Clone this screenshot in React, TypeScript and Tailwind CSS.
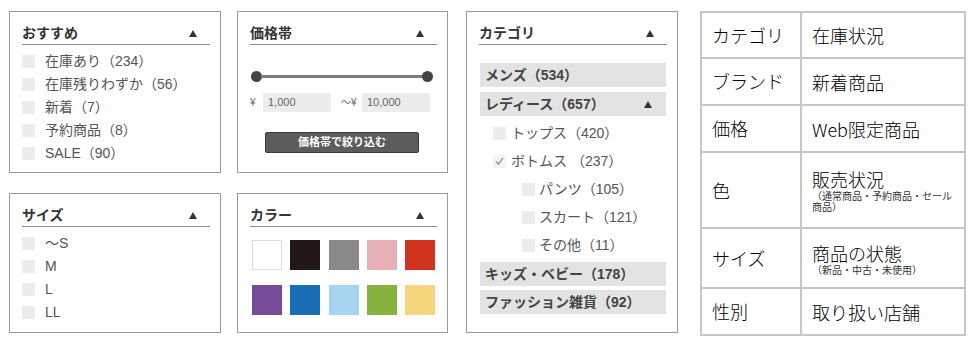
import type { ReactNode } from "react";

const FONT = '"Liberation Sans", "Noto Sans CJK JP", sans-serif';

function Tri({ className = "" }: { className?: string }) {
  return (
    <svg width="8" height="7" viewBox="0 0 8 7" className={className}>
      <polygon points="4,0 8,7 0,7" fill="#333" />
    </svg>
  );
}

function Panel({ title, className = "", children }: { title: string; className?: string; children: ReactNode }) {
  return (
    <div className={`border border-[#9a9a9a] bg-white pl-3 pr-[10px] pt-[10px] ${className}`}>
      <div className="flex h-[23px] items-center justify-between border-b border-[#8c8c8c]">
        <span className="text-[14px] font-bold text-[#333]">{title}</span>
        <Tri className="mr-[13px]" />
      </div>
      {children}
    </div>
  );
}

function Box() {
  return <span className="block h-[13px] w-[13px] shrink-0 bg-[#ececec]" />;
}

function CheckList({ items }: { items: string[] }) {
  return (
    <div className="mt-[5px]">
      {items.map((it) => (
        <div key={it} className="flex h-[23px] items-center gap-[10px] text-[14px] text-[#555]">
          <Box />
          <span>{it}</span>
        </div>
      ))}
    </div>
  );
}

const swatches = [
  "bg-white border border-[#dcdcdc]",
  "bg-[#231815]",
  "bg-[#8a8a8a]",
  "bg-[#e6b0b6]",
  "bg-[#d0331e]",
  "bg-[#774c98]",
  "bg-[#1a6db7]",
  "bg-[#a6d3f0]",
  "bg-[#86b33f]",
  "bg-[#f5d67c]",
];

function Bar({ children, arrow }: { children: ReactNode; arrow?: boolean }) {
  return (
    <div className="ml-[1px] mr-[1px] flex h-[24px] items-center justify-between bg-[#e3e3e3] pl-[5px] text-[14px] font-bold text-[#444]">
      <span>{children}</span>
      {arrow && <Tri className="mr-[14px]" />}
    </div>
  );
}

function Sub({ label, deep, checked }: { label: string; deep?: boolean; checked?: boolean }) {
  return (
    <div className={`flex h-[28px] items-center text-[14px] text-[#555] ${deep ? "pl-[43px] gap-[4px]" : "pl-[14px] gap-[5px]"}`}>
      {checked ? (
        <span className="flex h-[13px] w-[13px] items-center justify-center bg-[#f4f4f4]">
          <svg width="9" height="8" viewBox="0 0 9 8">
            <polyline points="1,4.5 3.5,7 8,1" fill="none" stroke="#888" strokeWidth="1.2" />
          </svg>
        </span>
      ) : (
        <Box />
      )}
      <span>{label}</span>
    </div>
  );
}

const rows: { k: string; v: string; note?: string; h: string }[] = [
  { k: "カテゴリ", v: "在庫状況", h: "h-[46px]" },
  { k: "ブランド", v: "新着商品", h: "h-[47px]" },
  { k: "価格", v: "Web限定商品", h: "h-[47px]" },
  { k: "色", v: "販売状況", note: "（通常商品・予約商品・セール商品）", h: "h-[76px]" },
  { k: "サイズ", v: "商品の状態", note: "（新品・中古・未使用）", h: "h-[60px]" },
  { k: "性別", v: "取り扱い店舗", h: "h-[47px]" },
];

export default function App() {
  return (
    <div className="flex h-[345px] w-[977px] bg-white pl-[9px] pt-[11px]" style={{ fontFamily: FONT }}>
      <div className="flex w-[212px] flex-col gap-[20px]">
        <Panel title="おすすめ" className="h-[162px]">
          <CheckList items={["在庫あり（234）", "在庫残りわずか（56）", "新着（7）", "予約商品（8）", "SALE（90）"]} />
        </Panel>
        <Panel title="サイズ" className="h-[140px]">
          <CheckList items={["～S", "M", "L", "LL"]} />
        </Panel>
      </div>

      <div className="ml-[16px] flex w-[211px] flex-col gap-[20px]">
        <Panel title="価格帯" className="h-[162px]">
          <div className="ml-[1px] mr-[4px] mt-[26px] flex items-center">
            <span className="h-[11px] w-[11px] shrink-0 rounded-full bg-[#444]" />
            <span className="-mx-[1px] h-[3px] flex-1 bg-[#7a7a7a]" />
            <span className="h-[11px] w-[11px] shrink-0 rounded-full bg-[#444]" />
          </div>
          <div className="mt-[11px] flex items-center text-[11px] text-[#666]">
            <span className="w-[13px] text-[10px]">¥</span>
            <span className="flex h-[19px] w-[68px] items-center bg-[#ececec] pl-[5px]">1,000</span>
            <span className="ml-[10px] w-[21px] text-[10px]">～¥</span>
            <span className="flex h-[19px] w-[68px] items-center bg-[#ececec] pl-[5px]">10,000</span>
          </div>
          <div className="ml-[15px] mt-[20px] flex h-[21px] w-[154px] items-center justify-center rounded-[2px] border border-[#3a3a3a] bg-[#5c5c5c] text-[11px] font-bold text-white">
            価格帯で絞り込む
          </div>
        </Panel>
        <Panel title="カラー" className="h-[140px]">
          <div className="ml-[2px] mt-[13px] grid grid-cols-[repeat(5,30px)] gap-x-[8.3px] gap-y-[15px]">
            {swatches.map((s, i) => (
              <span key={i} className={`block h-[30px] w-[30px] ${s}`} />
            ))}
          </div>
        </Panel>
      </div>

      <div className="ml-[18px] w-[212px]">
        <Panel title="カテゴリ" className="h-[322px]">
          <div className="mt-[18px]">
            <Bar>メンズ（534）</Bar>
            <div className="mt-[5px]">
              <Bar arrow>レディース（657）</Bar>
            </div>
            <div className="mt-[3px]">
              <Sub label="トップス（420）" />
              <Sub label="ボトムス （237）" checked />
              <Sub label="パンツ（105）" deep />
              <Sub label="スカート（121）" deep />
              <Sub label="その他（11）" deep />
            </div>
            <div className="mt-[3px]">
              <Bar>キッズ・ベビー（178）</Bar>
            </div>
            <div className="mt-[4px]">
              <Bar>ファッション雑貨（92）</Bar>
            </div>
          </div>
        </Panel>
      </div>

      <div className="ml-[22px] w-[266px]" style={{ fontFamily: '"Noto Sans CJK JP", sans-serif' }}>
        <table className="w-full border-collapse text-[18px] font-light text-black">
          <tbody>
            {rows.map((r) => (
              <tr key={r.k} className={r.h}>
                <td className="w-[100px] border-2 border-[#c6c6c6] pl-[10px] align-middle">{r.k}</td>
                <td className="border-2 border-[#c6c6c6] pl-[10px] pr-[8px] align-middle">
                  <div className="leading-[22px]">{r.v}</div>
                  {r.note && <div className="text-[10px] font-normal leading-[11px] text-[#333]">{r.note}</div>}
                </td>
              </tr>
            ))}
          </tbody>
        </table>
      </div>
    </div>
  );
}
